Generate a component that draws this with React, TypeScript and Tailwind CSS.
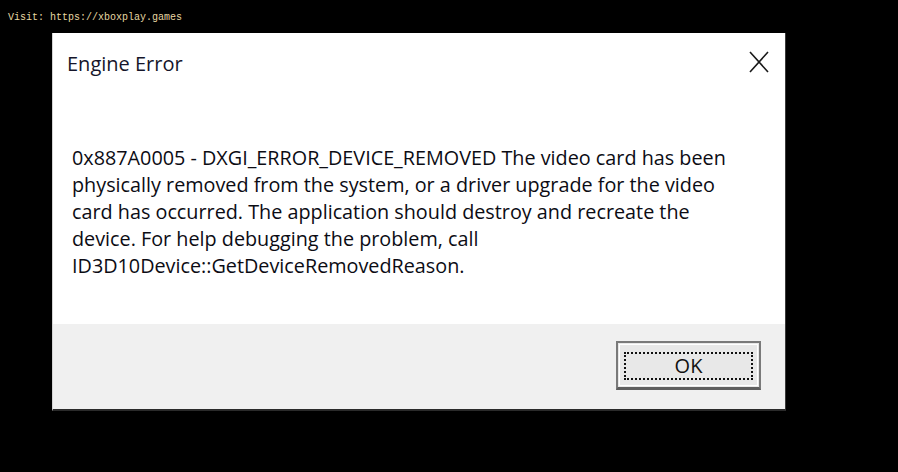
import React from "react";

const LINES = [
  "0x887A0005 - DXGI_ERROR_DEVICE_REMOVED The video card has been",
  "physically removed from the system, or a driver upgrade for the video",
  "card has occurred. The application should destroy and recreate the",
  "device. For help debugging the problem, call",
  "ID3D10Device::GetDeviceRemovedReason.",
];

function CloseIcon() {
  return (
    <svg width="20" height="22" viewBox="0 0 20 22" fill="none">
      <path d="M1 1 L19 21 M19 1 L1 21" stroke="#1a1a1a" strokeWidth="1.6" />
    </svg>
  );
}

export default function App() {
  return (
    <div className="w-[898px] h-[472px] bg-black flex flex-col overflow-hidden">
      <div className="h-[33px] pl-[8px] pt-[11px] text-[10px] leading-[14px] text-[#e6d7a3] font-['Liberation_Mono',monospace]">
        Visit: https://xboxplay.games
      </div>

      <div className="ml-[52px] w-[734px] h-[378px] flex flex-col border-l border-l-[#d4d4d4] border-r border-r-[#3a3a3a] border-b-2 border-b-[#2a2a2a] font-['Open_Sans',sans-serif]">
        <div className="bg-white h-[291px] flex flex-col">
          <div className="flex justify-between items-start pl-[14px] pr-[16px] pt-[17px]">
            <div className="text-[20px] leading-[28px] text-[#15152a]">Engine Error</div>
            <div className="pt-[1px]">
              <CloseIcon />
            </div>
          </div>
          <div className="pl-[19px] pt-[66px] text-[19.8px] leading-[27px] text-[#0c0c14]">
            {LINES.map((l) => (
              <div key={l} className="whitespace-nowrap">
                {l}
              </div>
            ))}
          </div>
        </div>

        <div className="flex-1 bg-[#f0f0f0] flex justify-end items-start pt-[17px] pr-[24px]">
          <div className="w-[145px] h-[49px] border-2 border-[#7a7a7a] border-b-[3px] border-b-[#5e5e5e] bg-[#e8e8e8] p-[1px]">
            <div className="w-full h-full border border-white flex p-[4px] pt-[7px] pb-[5px]">
              <div className="flex-1 border-2 border-dotted border-[#111] flex items-center justify-center text-[20px] text-[#111]">
                OK
              </div>
            </div>
          </div>
        </div>
      </div>
    </div>
  );
}
